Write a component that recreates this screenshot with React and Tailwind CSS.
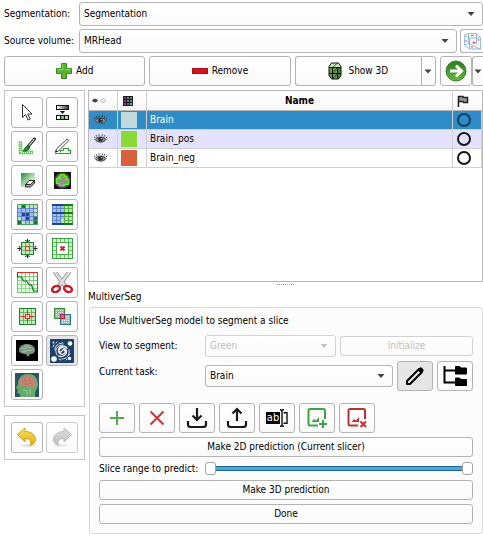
import React from "react";

const BTN_BASE = "flex items-center justify-center rounded-[3px] border border-[#b4b4b4]";
const BTN = `${BTN_BASE} bg-linear-to-b from-white to-[#fafafa]`;
const BTN_PRESSED = `${BTN_BASE} bg-[#e6e6e6]`;

const range = (n) => Array.from({ length: n }, (_, i) => i);

function Tool({ children }) {
  return (
    <svg width="22" height="21" viewBox="0 0 22 21" fill="none" aria-hidden="true">
      {children}
    </svg>
  );
}

/* Square lattice: a cell background with ruled lines and a darker frame */
function Lattice({ x, y, n, step, line, fill, frame = line }) {
  const size = n * step;
  return (
    <g>
      <rect x={x} y={y} width={size + 1} height={size + 1} fill={fill} />
      {range(n - 1).map((i) => (
        <g key={i} fill={line}>
          <rect x={x + (i + 1) * step} y={y} width="1" height={size + 1} />
          <rect x={x} y={y + (i + 1) * step} width={size + 1} height="1" />
        </g>
      ))}
      <rect x={x + 0.5} y={y + 0.5} width={size} height={size} stroke={frame} />
    </g>
  );
}

function Cells({ list, x, y, step, fill }) {
  return (
    <g fill={fill}>
      {list.map(([c, r]) => (
        <rect key={`${c}-${r}`} x={x + c * step + 1} y={y + r * step + 1} width={step - 1} height={step - 1} />
      ))}
    </g>
  );
}

const CursorIcon = () => (
  <Tool>
    <path d="M6.500 2.500v13l3-3 2.500 5.500 2.200-1-2.400-5h4.200z" fill="#fff" stroke="#333" />
  </Tool>
);

const ThresholdIcon = () => (
  <Tool>
    <defs>
      <linearGradient id="thr">
        <stop offset="0" stopColor="#fff" />
        <stop offset="1" stopColor="#333" />
      </linearGradient>
    </defs>
    <rect x="5.500" y="3.500" width="12" height="4" fill="url(#thr)" stroke="#111" />
    <path d="M9 9h5l-2.500 3z" fill="#111" />
    <rect x="5.500" y="13.500" width="12" height="4" fill="#fff" stroke="#111" />
    <rect x="9.500" y="13.500" width="4" height="4" fill="#6ec26e" stroke="#111" />
    <rect x="13.500" y="13.500" width="4" height="4" fill="#a9dca4" stroke="#111" />
  </Tool>
);

const PaintIcon = () => (
  <Tool>
    <path d="M4.500 5v11.500H17" stroke="#6fc56c" strokeWidth="3.500" />
    <path d="M4.500 5v11.500H17" stroke="#e3f7df" strokeWidth="1.500" strokeDasharray="1 1" />
    <path d="M18.500 3l-6 7" stroke="#222" strokeWidth="3" strokeLinecap="round" />
    <path d="M18.300 3.200l-5.500 6.500" stroke="#d0d0d0" strokeWidth="1.200" />
    <path d="M13.500 11c0 3.500-3.500 4.500-6.500 4 1.500-1 1.500-4 4.500-5z" fill="#22902a" stroke="#12621b" />
  </Tool>
);

const DrawIcon = () => (
  <Tool>
    <path d="M4 17.500h15.500v-3h-2v-2h-5v2h-3v2" stroke="#2ba12f" strokeWidth="1.200" />
    <path d="M5.500 13L16 3l1.800 1.500L7.500 15l-3 1z" fill="#f5f5f5" stroke="#555" />
    <path d="M4 16.500l2.500-.800L5 14.300z" fill="#111" />
  </Tool>
);

const EraseIcon = () => (
  <Tool>
    <defs>
      <linearGradient id="ers" x1="0" y1="0" x2="1" y2="1">
        <stop offset="0" stopColor="#1d8b3c" />
        <stop offset=".6" stopColor="#bfe6c0" />
        <stop offset="1" stopColor="#fff" />
      </linearGradient>
    </defs>
    <rect x="5" y="3" width="14" height="14" fill="url(#ers)" />
    <path d="M9.500 14.500l3.500-4h5.500l-4 4z" fill="#fff" stroke="#222" />
    <path d="M9.500 14.500V17h5l4-4v-2.500l-4 4z" fill="#aaa" stroke="#222" />
  </Tool>
);

const LevelTracingIcon = () => (
  <Tool>
    <defs>
      <radialGradient id="lvl">
        <stop offset=".3" stopColor="#fff" />
        <stop offset="1" stopColor="#171717" />
      </radialGradient>
    </defs>
    <rect x="3" y="2" width="17" height="17" fill="url(#lvl)" />
    <path d="M9.500 4.500h4v2h2v3h2v5h-5v1h-4v-2h-3v-5h4z" fill="#8d9688" stroke="#65f01d" strokeWidth="1.200" />
  </Tool>
);

const GrowIcon = () => (
  <Tool>
    <Lattice x={1} y={0} n={5} step={4} line="#5f86c8" frame="#4e9d59" fill="#a5bdec" />
    <Cells x={1} y={0} step={4} fill="#c6e7ad" list={[[0, 0], [2, 0], [3, 0], [4, 0], [4, 1], [4, 2], [0, 3], [1, 4], [3, 4]]} />
    <Cells x={1} y={0} step={4} fill="#147920" list={[[1, 0], [0, 4], [4, 4], [4, 3]]} />
    <Cells x={1} y={0} step={4} fill="#20458f" list={[[1, 2], [2, 2], [2, 3]]} />
  </Tool>
);

const FillSlicesIcon = () => (
  <Tool>
    <Lattice x={1} y={0} n={5} step={4} line="#5f86c8" fill="#a5bdec" />
    <path d="M13 1h9v20H10v-6h3z" fill="#b9e59f" />
    {range(3).map((i) => (
      <rect key={i} x={13 + i * 4} y="0" width="1" height="20" fill="#58ae4c" />
    ))}
    {range(6).map((i) => (
      <rect key={i} x="13" y={i * 4} width="9" height="1" fill="#58ae4c" />
    ))}
    {[0, 8, 19].map((y) => (
      <g key={y}>
        <rect x="1" y={y} width="12" height="2" fill="#20458f" />
        <rect x="13" y={y} width="9" height="2" fill="#147920" />
      </g>
    ))}
  </Tool>
);

const MarginIcon = () => (
  <Tool>
    <Lattice x={5} y={4} n={3} step={4} line="#69b86a" frame="#1f7d2b" fill="#c3e8bb" />
    <rect x="9.500" y="8.500" width="4" height="4" fill="#cfe6c8" stroke="#e1402d" />
    <path d="M9 2.500l2.500 1 2.500-1M11.500 1v2.500M9 18.500l2.500-1 2.500 1M11.500 20v-2.500M3 8l1.500 2.500L3 13M1.500 10.500h3M20 8l-1.500 2.500L20 13M21.500 10.500h-3" stroke="#222" />
  </Tool>
);

const HollowIcon = () => (
  <Tool>
    <Lattice x={1} y={0} n={5} step={4} line="#6fc070" frame="#3a9d40" fill="#d3efcc" />
    <rect x="5.500" y="4.500" width="12" height="12" fill="#fff" stroke="#49ad4d" />
    <path d="M9.500 8.500l4 4M13.500 8.500l-4 4" stroke="#df1d1d" strokeWidth="2" />
  </Tool>
);

const SmoothIcon = () => (
  <Tool>
    <Lattice x={1} y={0} n={5} step={4} line="#7ecb7c" frame="#62bb60" fill="#fbfefa" />
    <path d="M1.500 9v11.500h20V17h-4v-4h-4V9h-4V5h-4V1.500" fill="#bfe8b8" fillOpacity=".35" />
    <path d="M1.500 1v4h4l2 4h3l3 4h2l2 6h4" stroke="#137320" strokeWidth="1.200" />
    <path d="M1 .500h20.500V20" stroke="#e5321f" />
  </Tool>
);

const ScissorsIcon = () => (
  <Tool>
    <path d="M3.500-.500L14 14M18.500-.500L8 14" stroke="#888" strokeWidth="4" />
    <path d="M3.500-.500L14 14M18.500-.500L8 14" stroke="#e0e0e0" strokeWidth="2.500" />
    <ellipse cx="5" cy="17" rx="4" ry="2.800" stroke="#c71f27" strokeWidth="2.500" transform="rotate(-25 5 17)" />
    <ellipse cx="17" cy="17" rx="4" ry="2.800" stroke="#c71f27" strokeWidth="2.500" transform="rotate(25 17 17)" />
  </Tool>
);

const IslandsIcon = () => (
  <Tool>
    <Lattice x={3} y={2} n={4} step={4} line="#69b86a" frame="#1f7d2b" fill="#c9e9bd" />
    <path d="M11.500 4v13M5 10.500h13" stroke="#e9281c" />
    <rect x="9.500" y="8.500" width="4" height="4" fill="#fff" stroke="#e9281c" />
    <rect x="11" y="10" width="1" height="1" fill="#e9281c" />
  </Tool>
);

const LogicalIcon = () => (
  <Tool>
    <rect x="3.500" y="2.500" width="10" height="10" fill="#7fcc70" stroke="#348c34" />
    <rect x="9.500" y="8.500" width="10" height="10" fill="#83c4d4" stroke="#2a7489" />
    <rect x="9.500" y="8.500" width="4" height="4" fill="#dd6688" stroke="#9c2a4e" />
    <g stroke="#e3f6e8" strokeDasharray="1 1">
      <path d="M5 4.500h8M5 6.500h8M5 8.500h4M5 10.500h4M15 10.500h4M15 12.500h4M11 14.500h8M11 16.500h8" />
    </g>
  </Tool>
);

const BrainIcon = () => (
  <Tool>
    <rect width="22" height="21" fill="#000" />
    <path d="M3 10c0-4 4-6 8-6 5 0 8 3 8 6s-2 4-5 4l-2 3-2-3c-2 1-3-1-5-1-1 0-2-1-2-3z" fill="#79967f" />
    <path d="M5 9c2-2 3 1 5-1s3 1 5-1M6 12c3-2 4 0 7-2 2 1 3 0 4-1M8 6c2 1 3-1 5 0" stroke="#bdd0bd" strokeWidth=".800" />
  </Tool>
);

const GalaxyIcon = () => (
  <svg width="24" height="24" viewBox="0 0 24 24" fill="none" aria-hidden="true">
    <rect width="24" height="24" rx="1" fill="#1c3f6c" />
    <g stroke="#fff" strokeLinecap="round">
      <path d="M12 12c1-2.500 4-1 3 1.500-1.500 3-6.500 2-6.500-2C8.500 7 14 5.500 17 9M12 12c-1 2-3.500 1-3-1 1-3.500 7-3 7.500 1.500 0 4-4.500 6-8 4.500" strokeWidth="1.200" />
      <path d="M7 16C4 11 7 6 13 6M5 11c0-4 3-7 8-7M19 11c1 5-2 9-7 9" strokeWidth=".900" />
      <path d="M3 8l1-2M6 4l1-1M20 15l-1 1M17 20l-1 1M9 20l2 1" strokeWidth=".900" />
    </g>
    <g fill="#fff">
      <circle cx="20" cy="4.500" r="2.300" />
      <circle cx="4" cy="20" r="2.800" />
      <circle cx="19.500" cy="19.500" r="1.700" />
      <circle cx="3.500" cy="3.500" r=".900" />
    </g>
  </svg>
);

const HeadIcon = () => (
  <svg width="24" height="24" viewBox="0 0 24 24" fill="none" aria-hidden="true">
    <rect width="24" height="24" fill="#2c536a" />
    <path d="M5 24v-3l-3-1 1-3-2-2 2-4C3 4 8 1 13 1c7 0 10 5 10 10 0 4-2 6-3 8v5z" fill="#68a96c" />
    <path d="M4.500 10c0-5 4-7 8.500-7s8 3 8 7c0 3-2 5-5 5-2-1-4-2-5-2-3 1-6.500 0-6.500-3z" fill="#c98174" />
    <path d="M7 9c2-3 3 1 5-1s4 1 6-1M8 12c3-2 5 0 9-2M9 5l2 2M15 4v3" stroke="#b06a60" strokeWidth=".700" />
    <path d="M8 17l4 1v4M15 16v5" stroke="#93c992" strokeWidth="1.200" />
  </svg>
);

const UndoIcon = ({ id, light, dark, edge, flip }) => (
  <svg width="22" height="21" viewBox="0 0 22 21" fill="none" aria-hidden="true" className={flip ? "-scale-x-100" : ""}>
    <defs>
      <linearGradient id={id} x1="0" y1="0" x2="0" y2="1">
        <stop offset="0" stopColor={light} />
        <stop offset="1" stopColor={dark} />
      </linearGradient>
    </defs>
    <ellipse cx="12" cy="18.500" rx="8" ry="1.500" fill="#e4e4e4" />
    <path d="M1.500 7.500L9 1v3.500c7 0 10.500 4 10.500 8 0 3-2 5-5.500 6 2-3 1-7-5-7v3.500z" fill={`url(#${id})`} stroke={edge} strokeLinejoin="round" />
  </svg>
);

const TOOLS = [
  ["Select", CursorIcon],
  ["Threshold", ThresholdIcon],
  ["Paint", PaintIcon],
  ["Draw", DrawIcon],
  ["Erase", EraseIcon],
  ["Level tracing", LevelTracingIcon],
  ["Grow from seeds", GrowIcon],
  ["Fill between slices", FillSlicesIcon],
  ["Margin", MarginIcon],
  ["Hollow", HollowIcon],
  ["Smoothing", SmoothIcon],
  ["Scissors", ScissorsIcon],
  ["Islands", IslandsIcon],
  ["Logical operators", LogicalIcon],
  ["Brain", BrainIcon],
  ["MultiverSeg", GalaxyIcon],
  ["Head", HeadIcon],
];

const Caret = ({ className = "" }) => (
  <svg width="8" height="5" viewBox="0 0 8 5" aria-hidden="true" className={`shrink-0 ${className}`}>
    <path d="M.500.500h7L4 4.500z" fill="currentColor" />
  </svg>
);

function Select({ id, value, className = "", disabled = false }) {
  return (
    <div className={`relative min-w-0 flex-1 ${className}`}>
      <select
        id={id}
        disabled={disabled}
        className={`block size-full appearance-none rounded-[3px] border bg-linear-to-b from-white to-[#fafafa] pl-1 pr-5 opacity-100 ${
          disabled ? "border-[#d2d2d2] text-[#bebebe]" : "border-[#b4b4b4] text-black"
        }`}
      >
        <option>{value}</option>
      </select>
      <Caret className={`pointer-events-none absolute right-2 top-1/2 -translate-y-1/2 ${disabled ? "text-[#c4c4c4]" : "text-[#444]"}`} />
    </div>
  );
}

const PlusIcon = () => (
  <svg width="16" height="16" viewBox="0 0 16 16" aria-hidden="true">
    <path d="M5.500.500h5v5h5v5h-5v5h-5v-5h-5v-5h5z" fill="#59b52e" stroke="#3d8524" />
    <path d="M6.500 1.500v5h-5M9.500 6.500h5" fill="none" stroke="#93d873" />
  </svg>
);

const MinusIcon = () => (
  <svg width="16" height="16" viewBox="0 0 16 16" aria-hidden="true">
    <rect x=".500" y="5.500" width="15" height="5" fill="#d3141a" stroke="#a81116" />
  </svg>
);

const SurfaceIcon = () => (
  <svg width="14" height="18" viewBox="0 0 14 18" aria-hidden="true">
    <path d="M3.500 1h7L13 4.500v9L10.500 17h-7L1 13.500v-9z" fill="#6b9d55" />
    <path d="M3.500 1h7L13 5.500H1z" fill="#c9edb8" />
    <path d="M9.500 5.500H13v8L10.500 17h-1z" fill="#4a7a3a" />
    <path d="M3.500 1h7L13 4.500v9L10.500 17h-7L1 13.500v-9zM1 5.500h12M1 11.500h12M4.500 5.500v11M9.500 5.500v11" stroke="#111" fill="none" strokeWidth="1" />
    <path d="M4.500 11.500l5-6M4.500 17l5-5.500M4.500 5.500l5-4.500" stroke="#111" fill="none" strokeWidth=".700" />
  </svg>
);

const ArrowIcon = () => (
  <svg width="22" height="22" viewBox="0 0 22 22" aria-hidden="true">
    <defs>
      <linearGradient id="go" x1="0" y1="0" x2="0" y2="1">
        <stop offset="0" stopColor="#2f7a25" />
        <stop offset="1" stopColor="#67b63e" />
      </linearGradient>
    </defs>
    <circle cx="11" cy="11" r="10" fill="url(#go)" stroke="#3c7d2d" />
    <path d="M5 11h10M11 5.500l5.500 5.500-5.500 5.500" fill="none" stroke="#fff" strokeWidth="3" />
  </svg>
);

const CubeIcon = () => (
  <svg width="17" height="17" viewBox="0 0 17 17" fill="none" className="shrink-0" aria-hidden="true">
    <path d="M.500 2.500l4-2h8l4 4v11.500h-11l-5-4zM.500 2.500l5 2.500v11M5.500 5h11M4.500.500v10l12 5.500M.500 12l4-1.500M12.500.500v11" stroke="#7fa9da" strokeWidth=".800" />
    <path d="M7 2.500h2.500M1 8h2M8.500 9.500h3M10 8.500v2.500M13.500 7h2M7 14h2" stroke="#e84c4c" strokeWidth="1.200" />
  </svg>
);

const Eye = () => (
  <svg width="13" height="10" viewBox="0 0 13 10" fill="none" aria-hidden="true">
    <path d="M1 5.500C3 2.500 10 2 12 5.500 10 9 3.500 9 1 5.500z" fill="#8f9496" stroke="#33383a" strokeWidth=".900" />
    <circle cx="6.500" cy="5.300" r="2.300" fill="#222" />
    <circle cx="7.200" cy="4.700" r=".700" fill="#ddd" />
    <path d="M1 4L0 2.500M3 2.800L2 1M5 2V.300M8 2l.500-1.700M10 2.800L11 1M12 4l1-1" stroke="#222" strokeWidth=".800" />
  </svg>
);

const VisibilityIcon = () => (
  <svg width="14" height="7" viewBox="0 0 14 7" fill="none" aria-hidden="true">
    <path d="M0 3.500C1.500 1 4.500 1 6 3.500 4.500 6 1.500 6 0 3.500z" fill="#444" />
    <path d="M8.500 3.500C9.500 1.500 12 1.500 13.500 3.500 12 6 9.500 6 8.500 3.500z" stroke="#999" strokeWidth=".800" />
  </svg>
);

const PALETTE = ["#8b2b70", "#a66c2d", "#2c9c45", "#6d3da8", "#3f7fa8", "#2fa184", "#b23d48", "#376bc1", "#73c868"];
const PaletteIcon = () => (
  <svg width="10" height="10" viewBox="0 0 10 10" aria-hidden="true">
    <rect width="10" height="10" fill="#211a28" />
    {PALETTE.map((c, i) => (
      <rect key={i} x={(i % 3) * 3 + 1} y={Math.floor(i / 3) * 3 + 1} width="2" height="2" fill={c} />
    ))}
  </svg>
);

const FlagIcon = () => (
  <svg width="12" height="12" viewBox="0 0 12 12" aria-hidden="true">
    <path d="M1.500 12V1.500H6l.500 1H10.500v5H6.500L6 6.500H1.500" fill="#9a9a9a" stroke="#222" strokeWidth="1.500" />
  </svg>
);

const PencilIcon = () => (
  <svg width="20" height="20" viewBox="0 0 20 20" fill="none" aria-hidden="true">
    <path d="M2 15L14 3l3 3L5 18H2z" stroke="#000" strokeWidth="2" strokeLinejoin="round" />
    <path d="M12.500 4L15 1.500c1-1 4.500 2.500 3.500 3.500L16 7.500z" fill="#000" />
  </svg>
);

const TreeIcon = () => (
  <svg width="24" height="22" viewBox="0 0 24 22" fill="none" aria-hidden="true">
    <path d="M1.500 1v16.500H12M1.500 5.500H12" stroke="#000" strokeWidth="2" />
    <path d="M12.500 1.500h4L18 3h5.500v6h-11zM12.500 13h4l1.500 1.500h5.500v6h-11z" fill="#000" stroke="#000" strokeLinejoin="round" />
  </svg>
);

const ImageIcon = ({ color, children }) => (
  <svg width="20" height="20" viewBox="0 0 20 20" fill="none" stroke={color} strokeWidth="2" aria-hidden="true">
    <path d="M11 17.500H3Q1.500 17.500 1.500 16V2.500Q1.500 1 3 1h13.500Q18 1 18 2.500V11" />
    <path d="M4.500 14l2.500-3 2 1.500 3-3.500v5z" fill={color} stroke="none" />
    {children}
  </svg>
);

const ACTIONS = [
  ["Add task", (
    <svg width="16" height="16" viewBox="0 0 16 16" aria-hidden="true">
      <path d="M8 1v14M1 8h14" stroke="#57a957" strokeWidth="2" />
    </svg>
  )],
  ["Delete task", (
    <svg width="16" height="16" viewBox="0 0 16 16" aria-hidden="true">
      <path d="M1.500 1.500l13 13M14.500 1.500l-13 13" stroke="#c93636" strokeWidth="2" />
    </svg>
  )],
  ["Import", (
    <svg width="22" height="22" viewBox="0 0 22 22" fill="none" stroke="#1a1a1a" strokeWidth="2.200" aria-hidden="true">
      <path d="M11 1v12M6.500 8.500L11 13l4.500-4.500M2 14v3.500Q2 20 4.500 20h13q2.500 0 2.500-2.500V14" />
    </svg>
  )],
  ["Export", (
    <svg width="22" height="22" viewBox="0 0 22 22" fill="none" stroke="#1a1a1a" strokeWidth="2.200" aria-hidden="true">
      <path d="M11 14V2M6.500 6.500L11 2l4.500 4.500M2 14v3.500Q2 20 4.500 20h13q2.500 0 2.500-2.500V14" />
    </svg>
  )],
  ["Rename", (
    <span className="flex items-center">
      <span className="flex h-3 items-center bg-black px-px text-[11px] text-white">ab</span>
      <svg width="8" height="18" viewBox="0 0 8 18" fill="none" stroke="#111" aria-hidden="true">
        <path d="M0 .700h1l1 1 1-1h1M2 1.500v15M0 17.300h1l1-1 1 1h1M3.500 3.700h3.500v10.600H3.500" strokeWidth="1.400" />
      </svg>
    </span>
  )],
  ["Add image", <ImageIcon color="#3fa33f"><path d="M16 12v8M12 16h8" /></ImageIcon>],
  ["Remove image", <ImageIcon color="#c23030"><path d="M13.500 13.500l5.500 5.500M19 13.500L13.500 19" /></ImageIcon>],
];

const SEGMENTS = [
  { name: "Brain", swatch: "bg-[#c0dade]", row: "bg-[#308cc6] text-white", ring: "border-[#123f5d]" },
  { name: "Brain_pos", swatch: "bg-[#8bd83b]", row: "bg-[#e3e3ff]", ring: "border-[#151515]" },
  { name: "Brain_neg", swatch: "bg-[#d8603d]", row: "bg-white", ring: "border-[#151515]" },
];

const THUMB =
  "pointer-events-none absolute inset-0 m-0 size-full appearance-none bg-transparent [&::-webkit-slider-thumb]:pointer-events-auto [&::-webkit-slider-thumb]:h-[13px] [&::-webkit-slider-thumb]:w-[11px] [&::-webkit-slider-thumb]:appearance-none [&::-webkit-slider-thumb]:rounded-[3px] [&::-webkit-slider-thumb]:border [&::-webkit-slider-thumb]:border-[#a5a5a5] [&::-webkit-slider-thumb]:bg-white";

const TH = "border-b border-[#b8b8b8] p-0";
const TD = "border-b border-r border-[#d0d0d0] p-0";

export default function App() {
  return (
    <main className="flex flex-col overflow-hidden bg-white pt-0.5 font-['DejaVu_Sans_Condensed','DejaVu_Sans',sans-serif] text-[10px] leading-4 text-black">
      <div className="flex h-6 items-center pl-1">
        <label htmlFor="segmentation" className="w-[75px] shrink-0 whitespace-nowrap">Segmentation:</label>
        <Select id="segmentation" value="Segmentation" className="h-6" />
      </div>
      <div className="mt-[3px] flex h-6 items-center pl-1">
        <label htmlFor="volume" className="w-[75px] shrink-0 whitespace-nowrap">Source volume:</label>
        <Select id="volume" value="MRHead" className="h-6" />
        <button aria-label="Volume geometry" className={`${BTN} ml-[3px] h-6 w-[23px] rounded-r-none border-r-0`}><CubeIcon /></button>
      </div>
      <div className="mt-[3px] flex h-[30px] pl-1">
        <div className="grid flex-1 grid-cols-3 gap-1">
          <button className={`${BTN} gap-1`}><PlusIcon />Add</button>
          <button className={`${BTN} gap-1`}><MinusIcon />Remove</button>
          <div className="flex">
            <button className={`${BTN} flex-1 gap-[6px] rounded-r-none border-r-0`}><SurfaceIcon />Show 3D</button>
            <button aria-label="Show 3D options" className={`${BTN} w-[15px] rounded-l-none text-[#444]`}><Caret /></button>
          </div>
        </div>
        <button aria-label="Go to segmentations" className={`${BTN} ml-1 w-8`}><ArrowIcon /></button>
        <button aria-label="More modules" className={`${BTN} w-[11px] rounded-r-none border-r-0 text-[#444]`}><Caret /></button>
      </div>

      <div className="mt-1 flex pl-1">
        <div className="flex w-[81px] shrink-0 flex-col gap-2">
          <div className="grid grid-cols-[32px_32px] content-start gap-[3px] border border-[#c4c4c4] px-1.5 py-1.5">
            {TOOLS.map(([name, Icon]) => (
              <button key={name} aria-label={name} className={`${name === "MultiverSeg" ? BTN_PRESSED : BTN} h-[31px]`}>
                <Icon />
              </button>
            ))}
          </div>
          <div className="grid grid-cols-[32px_32px] gap-[3px] border border-[#c4c4c4] px-1.5 py-1.5">
            <button aria-label="Undo" className={`${BTN} h-[31px]`}><UndoIcon id="undo" light="#f9e25a" dark="#e2ae10" edge="#d0a41c" /></button>
            <button aria-label="Redo" className={`${BTN} h-[31px] opacity-70`} disabled><UndoIcon id="redo" light="#d4d4d4" dark="#a2a2a2" edge="#a0a0a0" flip /></button>
          </div>
        </div>

        <div className="ml-[3px] flex min-w-0 flex-1 flex-col">
          <div className="h-[192px] border border-[#b8b8b8] bg-white">
            <table className="w-full table-fixed border-separate border-spacing-0">
              <colgroup>
                <col className="w-[29px]" />
                <col className="w-[29px]" />
                <col />
                <col className="w-[29px]" />
              </colgroup>
              <thead>
                <tr className="h-5 bg-linear-to-b from-white to-[#f7f7f7]">
                  <th aria-label="Visibility" className={`${TH} border-r border-r-[#d0d0d0]`}><div className="pl-[3px]"><VisibilityIcon /></div></th>
                  <th aria-label="Color" className={`${TH} border-r border-r-[#d0d0d0]`}><div className="pl-[5px]"><PaletteIcon /></div></th>
                  <th className={`${TH} border-r border-r-[#d0d0d0] font-bold`}>Name</th>
                  <th aria-label="Status" className={TH}><div className="pl-1"><FlagIcon /></div></th>
                </tr>
              </thead>
              <tbody>
                {SEGMENTS.map((s) => (
                  <tr key={s.name} className={`h-[19px] ${s.row}`}>
                    <td className={TD}><div className="pl-[5px]"><Eye /></div></td>
                    <td className={TD}><div className={`ml-[3px] size-4 ${s.swatch}`} /></td>
                    <td className={`${TD} pl-[3px]`}>{s.name}</td>
                    <td className={TD}><div className={`ml-1 size-[14px] rounded-full border-2 ${s.ring}`} /></td>
                  </tr>
                ))}
              </tbody>
            </table>
          </div>
          <div className="mx-auto mt-0.5 w-[17px] border-t border-dotted border-[#999]" />
          <h2 className="mt-1 leading-4">MultiverSeg</h2>

          <section className="ml-px mt-[2px] flex flex-col rounded-[3px] border border-[#dcdcdc] bg-[#fcfcfc] px-[9px] pb-[9px] pt-[5px]">
            <p className="h-[22px] leading-4">Use MultiverSeg model to segment a slice</p>
            <div className="flex h-[22px] items-center">
              <label htmlFor="view" className="w-[106px] shrink-0 whitespace-nowrap">View to segment:</label>
              <Select id="view" value="Green" disabled className="h-[22px]" />
              <button disabled className={`${BTN} ml-1 h-5 flex-1 border-[#d2d2d2] text-[#bebebe]`}>Initialize</button>
            </div>
            <div className="mt-1 flex h-[30px] items-center">
              <label htmlFor="task" className="w-[106px] shrink-0 self-start whitespace-nowrap pt-[3px]">Current task:</label>
              <Select id="task" value="Brain" className="h-[22px]" />
              <button aria-label="Edit task" aria-pressed="true" className={`${BTN_PRESSED} ml-1 h-full w-9`}><PencilIcon /></button>
              <button aria-label="Task tree" className={`${BTN} ml-1 h-full w-9`}><TreeIcon /></button>
            </div>
            <div className="mt-3 flex gap-1">
              {ACTIONS.map(([name, icon]) => (
                <button key={name} aria-label={name} className={`${BTN} h-[30px] w-9`}>{icon}</button>
              ))}
            </div>
            <button className={`${BTN} mt-1 h-5`}>Make 2D prediction (Current slicer)</button>
            <div className="mt-1 flex h-[15px] items-center">
              <label htmlFor="range-start" className="w-[106px] shrink-0 whitespace-nowrap">Slice range to predict:</label>
              <div className="relative flex h-[15px] flex-1 items-center">
                <div className="h-[5px] w-full border-y border-[#1d6797] bg-[#4ba6dc]" />
                <input id="range-start" type="range" min="0" max="100" defaultValue="0" className={THUMB} />
                <input aria-label="Slice range end" type="range" min="0" max="100" defaultValue="100" className={THUMB} />
              </div>
            </div>
            <button className={`${BTN} mt-1 h-5`}>Make 3D prediction</button>
            <button className={`${BTN} mt-1 h-5`}>Done</button>
          </section>
        </div>
      </div>
    </main>
  );
}
